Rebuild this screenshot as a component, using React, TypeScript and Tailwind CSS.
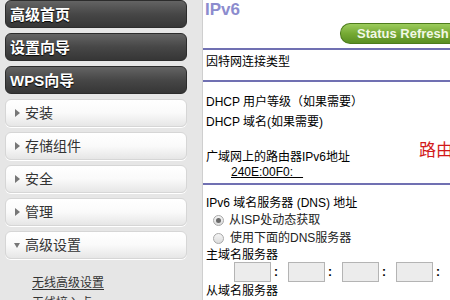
import React from "react";

const DARK_ITEMS = ["高级首页", "设置向导", "WPS向导"];
const LIGHT_ITEMS = ["安装", "存储组件", "安全", "管理"];

const DarkButton = ({ label }: { label: string }) => (
  <div className="h-[28px] rounded-[6px] border border-[#2c2c2c] bg-gradient-to-b from-[#646464] via-[#474747] to-[#363636] flex items-center pl-[4px] text-white text-[15px] font-bold leading-none [text-shadow:0_1px_1px_#000]">
    {label}
  </div>
);

const LightButton = ({ label, open }: { label: string; open?: boolean }) => (
  <div className="h-[28px] rounded-[6px] border border-[#d6d6d6] bg-gradient-to-b from-white via-[#fafafa] to-[#e6e6e6] flex items-center gap-[5px] pl-[9px] text-[#333] text-[14px] leading-none shadow-[0_1px_0_#fff]">
    {open ? (
      <span className="w-0 h-0 border-x-[3px] border-x-transparent border-t-[5px] border-t-[#777] ml-[-1px]" />
    ) : (
      <span className="w-0 h-0 border-y-[4px] border-y-transparent border-l-[5px] border-l-[#777]" />
    )}
    <span>{label}</span>
  </div>
);

const Radio = ({ checked }: { checked?: boolean }) => (
  <span className="w-[11px] h-[11px] rounded-full border border-[#a8a8a8] bg-gradient-to-b from-[#f4f4f4] to-[#dcdcdc] flex items-center justify-center">
    {checked && <span className="w-[5px] h-[5px] rounded-full bg-[#6a6a6a]" />}
  </span>
);

const Divider = () => <div className="h-[2px] bg-[#7070b2]" />;

export default function App() {
  return (
    <div className="w-[450px] h-[300px] overflow-hidden flex bg-white font-['Liberation_Sans','Noto_Sans_CJK_SC',sans-serif]">
      {/* sidebar */}
      <div className="w-[203px] shrink-0 bg-[#e6e6e6] border-r border-[#cfcfcf] pl-[5px] pr-[15px] flex flex-col">
        <div className="flex flex-col gap-[5px]">
          {DARK_ITEMS.map((d) => (
            <DarkButton key={d} label={d} />
          ))}
          {LIGHT_ITEMS.map((l) => (
            <LightButton key={l} label={l} />
          ))}
          <LightButton label="高级设置" open />
        </div>
        <div className="mt-[16px] pl-[27px] flex flex-col text-[12px] leading-[16px] text-[#333]">
          <span className="underline underline-offset-2">无线高级设置</span>
          <span className="mt-[4px]">无线接入点</span>
        </div>
      </div>

      {/* main panel */}
      <div className="flex-1 flex flex-col text-[12px] text-black">
        <div className="h-[20px] pl-[2px] text-[17px] font-bold leading-[20px] text-[#8c8cce]">IPv6</div>
        <div className="mt-[3px] h-[21px] flex justify-end">
          <div className="w-[110px] rounded-l-[10px] border border-r-0 border-[#4d7c1c] bg-gradient-to-b from-[#9ccc5c] via-[#76aa34] to-[#5a8f22] flex items-center pl-[16px] text-[13px] font-bold text-[#f2f8e6] whitespace-nowrap">
            Status Refresh
          </div>
        </div>
        <div className="mt-[4px]">
          <Divider />
        </div>
        <div className="h-[30px] pl-[3px] pt-[4px] leading-[16px]">因特网连接类型</div>
        <Divider />
        <div className="mt-[10px] pl-[3px] leading-[20px]">DHCP 用户等级（如果需要）</div>
        <div className="pl-[3px] leading-[20px]">DHCP 域名(如果需要)</div>
        <div className="mt-[11px] flex items-start justify-between">
          <span className="pl-[3px] mt-[6px] leading-[16px]">广域网上的路由器IPv6地址</span>
          <span className="mr-[-20px] text-[17px] leading-[16px] text-[#d21a1a] whitespace-nowrap">路由器</span>
        </div>
        <div className="pl-[28px] leading-[15px]">
          <span className="underline">240E:00F0:&nbsp;&nbsp;&nbsp;</span>
        </div>
        <div className="mt-[3px]">
          <Divider />
        </div>
        <div className="mt-[10px] pl-[3px] leading-[16px]">IPv6 域名服务器 (DNS) 地址</div>
        <div className="pl-[10px] flex items-center gap-[5px] leading-[16px] h-[16px] mt-[1px]">
          <Radio checked />
          <span className="text-[#222]">从ISP处动态获取</span>
        </div>
        <div className="pl-[10px] mt-[2px] flex items-center gap-[6px] leading-[16px] h-[16px]">
          <Radio />
          <span className="text-[#222]">使用下面的DNS服务器</span>
        </div>
        <div className="pl-[3px] leading-[13px] mt-[3px]">主域名服务器</div>
        <div className="pl-[31px] flex items-center h-[20px]">
          {[0, 1, 2, 3].map((i) => (
            <div key={i} className="flex items-center">
              <div className="w-[37px] h-[20px] border border-[#b4b4b4] bg-[#ececec]" />
              <span className="w-[17px] pl-[3px] font-bold leading-none">:</span>
            </div>
          ))}
        </div>
        <div className="pl-[3px] mt-[1px] leading-[16px]">从域名服务器</div>
      </div>
    </div>
  );
}
